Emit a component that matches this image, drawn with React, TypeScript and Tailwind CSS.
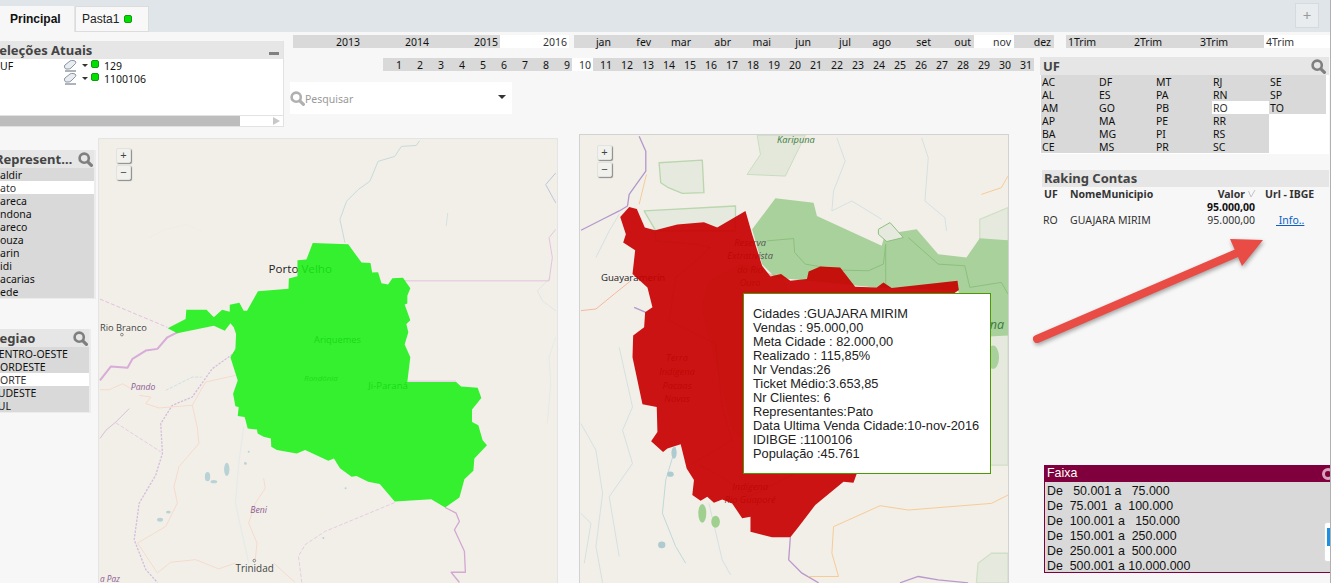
const years = ['2013', '2014', '2015', '2016'];
const months = ['jan', 'fev', 'mar', 'abr', 'mai', 'jun', 'jul', 'ago', 'set', 'out', 'nov', 'dez'];
const trims = ['1Trim', '2Trim', '3Trim', '4Trim'];
const days = Array.from({ length: 31 }, (_, i) => i + 1);
const ufColumns = [
  ['AC', 'AL', 'AM', 'AP', 'BA', 'CE'],
  ['DF', 'ES', 'GO', 'MA', 'MG', 'MS'],
  ['MT', 'PA', 'PB', 'PE', 'PI', 'PR'],
  ['RJ', 'RN', 'RO', 'RR', 'RS', 'SC'],
  ['SE', 'SP', 'TO'],
];
const reps = ['aldir', 'ato', 'areca', 'ndona', 'areco', 'ouza', 'arin', 'idi', 'acarias', 'ede'];
const regions = ['CENTRO-OESTE', 'NORDESTE', 'NORTE', 'SUDESTE', 'SUL'];
const faixas = [
  'De \u00a0\u00a050.001 a \u00a0\u00a075.000',
  'De \u00a075.001 \u00a0a \u00a0100.000',
  'De \u00a0100.001 a \u00a0\u00a0150.000',
  'De \u00a0150.001 a \u00a0250.000',
  'De \u00a0250.001 a \u00a0500.000',
  'De \u00a0500.001 a 10.000.000',
];
const tooltipLines = [
  'Cidades :GUAJARA MIRIM',
  'Vendas : 95.000,00',
  'Meta Cidade : 82.000,00',
  'Realizado : 115,85%',
  'Nr Vendas:26',
  'Ticket Médio:3.653,85',
  'Nr Clientes: 6',
  'Representantes:Pato',
  'Data Ultima Venda Cidade:10-nov-2016',
  'IDIBGE :1100106',
  'População :45.761',
];

function SearchGlyph({ light }: { light?: boolean }) {
  return (
    <svg width="15" height="15" viewBox="0 0 15 15" className="shrink-0">
      <circle cx="6.2" cy="6.2" r="4.6" fill="none" stroke={light ? '#b0b0b0' : '#7f7f7f'} strokeWidth="2.6" />
      <path d="M9.8 9.8 L13.4 13.4" stroke={light ? '#b0b0b0' : '#7f7f7f'} strokeWidth="3.2" strokeLinecap="round" />
    </svg>
  );
}

function Eraser() {
  return (
    <svg width="14" height="13" viewBox="0 0 14 13" className="shrink-0">
      <path d="M1.5 8 Q1 7 2 6 L7 2 Q8 1.2 10 1.5 L12 2 Q13.5 3 12.5 4.5 L8 9 Q7 10 5 10 L3 10 Q2 10 1.5 8 Z" fill="#e9edf2" stroke="#8a94a2" strokeWidth="1" />
      <path d="M2 12 H13" stroke="#5d6876" strokeWidth="1" />
    </svg>
  );
}

function GreenDot() {
  return <span className="inline-block w-[8px] h-[8px] rounded-[2px] bg-[#00e000] border border-[#129a12]" />;
}

function SelectionRow({ field, value }: { field: string; value: string }) {
  return (
    <div className="flex items-center h-[13px]">
      <span className="w-[63px] mt-[2px]">{field}</span>
      <Eraser />
      <span className="ml-[5px] mr-[3px] w-0 h-0 border-x-[3px] border-x-transparent border-t-[3px] border-t-[#333]" />
      <span className="-mt-[3px] flex"><GreenDot /></span>
      <span className="ml-[5px] mt-[2px]">{value}</span>
    </div>
  );
}

function ZoomControls({ top }: { top: string }) {
  return (
    <div className={`absolute left-[17px] ${top} flex flex-col gap-[2px] text-[#444] font-['Liberation_Sans',sans-serif]`}>
      {['+', '−'].map((s) => (
        <div
          key={s}
          className="w-[15px] h-[15px] rounded-[2px] bg-[#f1f1ee] border border-[#e2e2de] shadow-[1px_1px_1px_#8a8a8a] flex items-center justify-center text-[11px] leading-none"
        >
          {s}
        </div>
      ))}
    </div>
  );
}

function ListHeader({ title, offset }: { title: string; offset: string }) {
  return (
    <div className="flex items-center justify-between h-[18px] bg-[#e6e6e6] pr-[1px] overflow-hidden">
      <span className={`${offset} text-[13px] font-bold text-[#444] whitespace-nowrap`}>{title}</span>
      <SearchGlyph />
    </div>
  );
}

function MapLeft() {
  return (
    <svg viewBox="9 24 1380 1335" className="w-full h-full block font-['Open_Sans',sans-serif]">
      <rect x="0" y="0" width="1400" height="1400" fill="#f2efe9" />
      <g fill="none" strokeLinejoin="round">
        <path d="M975 28 965 42 920 45 900 75 850 90 825 150 790 175 755 210 735 265 750 335" stroke="#c5dadb" strokeWidth="3" />
        <path d="M1385 125 1355 160 1385 215" stroke="#b9c6dd" strokeWidth="3" />
        <path d="M1060 245 1055 285" stroke="#c5dadb" strokeWidth="2" />
        <path d="M1385 540 1345 510 1330 480 1370 440" stroke="#d4e0e0" strokeWidth="2" />
        <path d="M1385 620 1365 680 1370 760 1360 880" stroke="#dfe6e4" strokeWidth="2" />
        <path d="M12 750 45 708 95 712 110 685 150 660 185 655 215 620 245 605" stroke="#d8acd8" strokeWidth="6" />
        <path d="M12 505 215 590" stroke="#e3bfdf" strokeWidth="3" strokeDasharray="12 6" />
        <path d="M925 450 1365 450 1375 380 1365 320 1385 295" stroke="#e3c3df" strokeWidth="3" />
        <path d="M938 752 1085 752" stroke="#e3c3df" strokeWidth="3" />
        <path d="M1052 1133 1085 1150 1095 1175 1080 1200 1110 1265 1113 1328 1070 1328 1095 1359" stroke="#d3a8d3" strokeWidth="4" />
        <path d="M900 1118 690 1205 630 1245 610 1280 620 1359" stroke="#e6cde0" strokeWidth="3" strokeDasharray="12 5" />
        <path d="M420 665 350 715 290 800 230 825 195 880 200 970 180 1035 130 1120 115 1230 150 1320 185 1359" stroke="#d5bedb" strokeWidth="4" strokeDasharray="7 4" />
        <path d="M60 878 195 965" stroke="#e6cde0" strokeWidth="3" strokeDasharray="12 5" />
        <path d="M12 925 30 900 60 875 100 835" stroke="#d5bedb" strokeWidth="3" />
        <path d="M12 778 40 778 80 760 105 775" stroke="#f6d6c6" strokeWidth="2.5" />
        <path d="M130 795 165 800 150 820 190 833 290 825 305 890 310 940 250 1010 235 1070 245 1120 210 1190 125 1240 185 1330 225 1298 300 1290 370 1318 420 1300" stroke="#f6d6c6" strokeWidth="2.5" />
        <path d="M290 825 330 755 420 735" stroke="#f6d6c6" strokeWidth="2.5" />
        <path d="M505 1045 510 1075 480 1120 460 1180 485 1240 480 1290" stroke="#f6d6c6" strokeWidth="2.5" />
        <path d="M535 1300 600 1359" stroke="#f6d6c6" strokeWidth="2.5" />
        <path d="M210 780 290 740 320 740" stroke="#cfe0e0" strokeWidth="3" strokeDasharray="10 4" />
        <path d="M445 890 430 1000 420 1120 460 1300" stroke="#e6ebe8" strokeWidth="4" />
        <path d="M160 320 210 295 270 280 320 300" stroke="#ecebe6" strokeWidth="2" />
      </g>
      <g fill="#b8d2d5">
        <ellipse cx="336" cy="1040" rx="8" ry="14" />
        <ellipse cx="355" cy="1055" rx="10" ry="5" />
        <ellipse cx="394" cy="1018" rx="8" ry="20" />
        <ellipse cx="193" cy="1170" rx="9" ry="6" />
        <ellipse cx="218" cy="1147" rx="7" ry="4" />
        <circle cx="450" cy="1000" r="4" />
        <circle cx="460" cy="965" r="3" />
        <circle cx="752" cy="1075" r="3" />
        <circle cx="685" cy="1225" r="3" />
      </g>
      <circle cx="78" cy="612" r="4" fill="none" stroke="#555" strokeWidth="2" />
      <circle cx="477" cy="1293" r="4" fill="none" stroke="#555" strokeWidth="2" />
      <text x="12" y="600" fontSize="28" fill="#444">Rio Branco</text>
      <text x="105" y="778" fontSize="26" fontStyle="italic" fill="#8d5c92">Pando</text>
      <text x="465" y="1150" fontSize="26" fontStyle="italic" fill="#8d5c92">Beni</text>
      <text x="420" y="1327" fontSize="30" fill="#444">Trinidad</text>
      <text x="12" y="1358" fontSize="25" fontStyle="italic" fill="#8d5c92">a Paz</text>
      <text x="520" y="427" fontSize="35" fill="#222">Porto Velho</text>
      <text x="657" y="637" fontSize="28" fill="#222">Ariquemes</text>
      <text x="627" y="753" fontSize="24" fontStyle="italic" fill="#444">Rondônia</text>
      <text x="820" y="776" fontSize="29" fill="#222">Ji-Paraná</text>
      <polygon
        fill="#19f015"
        fillOpacity="0.88"
        points="216,593 270,565 272,537 333,537 355,560 380,537 403,543 403,522 432,516 445,540 455,540 488,481 580,474 581,443 607,436 607,388 634,386 653,336 760,340 800,395 827,396 832,425 850,424 860,457 880,461 893,442 925,441 947,472 938,495 938,518 930,521 947,569 935,580 941,605 930,642 947,680 938,755 1085,755 1100,768 1150,772 1161,803 1133,838 1133,875 1152,885 1165,930 1178,945 1140,985 1137,1022 1110,1048 1095,1103 1052,1133 1010,1108 900,1115 855,1062 820,1055 785,1038 770,1040 735,1015 717,985 700,992 630,960 605,970 545,960 528,950 527,925 505,920 487,910 485,898 457,895 448,860 427,857 430,830 420,828 413,790 427,750 405,680 420,655 422,610 415,590 405,578 388,600 355,585 245,608"
      />
    </svg>
  );
}

function MapRight() {
  return (
    <svg viewBox="12 12 1288 1347" className="w-full h-full block font-['Open_Sans',sans-serif]">
      <rect x="0" y="0" width="1400" height="1400" fill="#f2efe9" />
      <g fill="#e6eade" stroke="#b9d6ad" strokeWidth="4" strokeLinejoin="round">
        <path d="M250 95 380 87 385 185 320 187 278 170 255 155Z" />
        <path d="M205 240 480 225 480 300 240 300Z" />
        <path d="M545 12 690 12 630 135 515 130 555 70Z" fill="#e3e8da" stroke="#c9dcbf" strokeWidth="3" />
        <path d="M1215 265 1300 230 1300 340 1215 340Z" stroke="#cfe0c6" />
        <path d="M1245 610 1300 610 1300 1005 1245 1005Z" stroke="#cfe0c6" />
        <path d="M1205 1359 1210 1300 1250 1270 1300 1270 1300 1359Z" stroke="#cfe0c6" />
      </g>
      <path
        fill="#a9d19b"
        d="M530 295 600 202 715 215 725 255 920 345 930 310 1025 295 1090 370 1175 380 1215 322 1300 328 1300 615 1200 620 1150 480 900 470 600 440 560 400Z"
      />
      <ellipse cx="1255" cy="680" rx="18" ry="35" fill="#a9d19b" />
      <path d="M910 295 945 275 985 320 935 332 910 310Z" fill="#e6eade" stroke="#8cc07c" strokeWidth="3" />
      <g fill="none" stroke="#8cc07c" strokeWidth="3" strokeLinejoin="round">
        <path d="M575 330 655 323 658 365 690 400 720 405 800 418 880 420 925 400 932 340 932 470" />
        <path d="M1000 320 1090 400 1170 405 1185 470 1280 455 1300 490" />
      </g>
      <g fill="none" strokeLinejoin="round">
        <path d="M190 15 210 60 210 120 160 190 155 225 130 240 80 265 15 298" stroke="#b398cc" strokeWidth="4" />
        <path d="M212 130 190 220" stroke="#f7cb95" strokeWidth="3" />
        <path d="M15 540 60 535 115 490 165 450" stroke="#f5b89b" strokeWidth="3" />
        <path d="M175 530 210 545" stroke="#b398cc" strokeWidth="4" />
        <path d="M645 1222 640 1290 680 1330 730 1359" stroke="#bb98cc" strokeWidth="4" />
        <path d="M975 1359 1030 1340 1090 1350 1180 1359" stroke="#bb98cc" strokeWidth="4" />
        <path d="M775 1190 915 1127 1000 1140 1250 1120 1300 1095" stroke="#f7cb95" strokeWidth="3" />
        <path d="M775 1190 770 1270 790 1340 700 1340" stroke="#f7cb95" strokeWidth="3" />
        <path d="M1220 190 1280 170 1300 135" stroke="#f7cb95" strokeWidth="3" />
        <path d="M785 20 810 90 775 180 770 240 830 210 920 265" stroke="#c5dadb" strokeWidth="2" />
        <path d="M1040 20 1060 80 1050 210 1110 260 1115 300" stroke="#c5dadb" strokeWidth="2" />
        <path d="M15 880 60 960 80 1090 60 1250 80 1359" stroke="#c5dadb" strokeWidth="2" />
        <path d="M130 650 170 830 140 900 170 1000 100 1100 130 1280" stroke="#c5dadb" strokeWidth="2" />
        <path d="M300 950 270 1050 260 1150 300 1250 330 1300" stroke="#bfd8da" strokeWidth="3" />
        <path d="M15 1150 45 1180 25 1300" stroke="#c5dadb" strokeWidth="2" />
        <path d="M60 380 100 300 130 250" stroke="#c5dadb" strokeWidth="2" />
        <path d="M400 1120 440 1290 465 1335" stroke="#c5dadb" strokeWidth="2" />
      </g>
      <g fill="#9fd08f">
        <ellipse cx="380" cy="1150" rx="12" ry="28" />
        <ellipse cx="420" cy="1175" rx="13" ry="18" />
      </g>
      <g fill="#aeccd0">
        <ellipse cx="295" cy="968" rx="8" ry="18" />
        <ellipse cx="284" cy="1032" rx="10" ry="8" />
        <ellipse cx="258" cy="1245" rx="11" ry="10" />
      </g>
      <text x="605" y="35" fontSize="28" fontStyle="italic" fill="#3c7a3c">Karipuna</text>
      <text x="75" y="450" fontSize="29" fill="#222">Guayaramerín</text>
      <text x="1245" y="596" fontSize="38" fontStyle="italic" fill="#3c7a3c">na</text>
      <g fontSize="28" fontStyle="italic" fill="#555" textAnchor="middle">
        <text x="524" y="344">Reserva</text>
        <text x="524" y="385">Extrativista</text>
        <text x="524" y="426">do Rio</text>
        <text x="524" y="467">Ouro</text>
        <text x="304" y="693">Terra</text>
        <text x="304" y="734">Indígena</text>
        <text x="304" y="775">Pacaas</text>
        <text x="304" y="816">Novas</text>
        <text x="524" y="1080">Indígena</text>
        <text x="524" y="1120">Rio Guaporé</text>
      </g>
      <polygon
        fill="#c80000"
        fillOpacity="0.92"
        points="133,258 160,228 183,234 207,290 238,298 305,281 385,274 425,290 510,240 530,310 560,405 585,437 617,430 645,450 695,445 700,422 735,407 795,410 840,468 905,470 925,455 950,472 1148,450 1152,478 1135,490 1100,700 845,1030 835,1058 805,1055 720,1125 670,1190 645,1222 590,1222 525,1205 525,1160 500,1165 470,1120 440,1108 415,1118 395,1100 375,1112 350,1095 355,1050 333,1015 315,942 275,955 262,965 226,933 245,905 243,830 200,822 170,680 172,615 205,590 208,545 230,530 215,470 170,430 178,358 142,335 150,310"
      />
      <path d="M378 530 400 450 500 400 620 440 700 600 600 1000 470 900 420 700Z" fill="#bf1208" fillOpacity="0.2" />
      <g fill="none" stroke="#b51010" strokeWidth="2" strokeOpacity="0.35">
        <path d="M238 298 240 330 360 340 405 350 350 400 300 440 280 570 420 640 440 830 470 930 350 1000" />
        <path d="M370 1005 440 1040 520 1100 660 1030" />
      </g>
    </svg>
  );
}

export default function App() {
  return (
    <div className="relative w-[1331px] h-[583px] overflow-hidden bg-[#f7f7f7] text-[10.5px] leading-[15px] text-[#111] font-['Noto_Sans',sans-serif]">
      {/* tab bar */}
      <div className="flex items-end justify-between h-[32px] bg-[#dfe5e8] pr-[12px]">
        <div className="flex items-end">
          <div className="w-[74px] h-[26px] bg-[#f7f7f7] pl-[10px] flex items-center text-[12px] font-bold font-['Liberation_Sans',sans-serif]">
            Principal
          </div>
          <div className="ml-px w-[74px] h-[26px] bg-[#f8f8f8] border border-[#dcdcdc] pl-[6px] flex items-center gap-[5px] text-[12px] text-[#222] font-['Liberation_Sans',sans-serif]">
            Pasta1 <GreenDot />
          </div>
        </div>
        <div className="mb-[4px] w-[24px] h-[25px] bg-[#e8ecee] border border-[#d5dadc] flex items-center justify-center text-[#999] text-[15px]">+</div>
      </div>

      {/* top filters */}
      <div className="flex items-start h-[102px]">
        <div className="mt-[9px] w-[284px] h-[86px] bg-white border-r border-b border-[#e2e2e2] shrink-0 flex flex-col">
          <div className="flex items-center justify-between h-[18px] bg-[#e6e6e6] pr-[4px] overflow-hidden">
            <span className="-ml-[8px] text-[13px] font-bold text-[#444] whitespace-nowrap">Seleções Atuais</span>
            <span className="mt-[6px] w-[10px] h-[3px] bg-[#808080]" />
          </div>
          <div className="h-[56px]">
            <SelectionRow field="UF" value="129" />
            <SelectionRow field="" value="1100106" />
          </div>
          <div className="flex items-center h-[11px] border-t border-[#e2e2e2]">
            <div className="w-[240px] h-full bg-[#bdbdbd]" />
            <div className="ml-auto mr-[3px] w-0 h-0 border-y-[4px] border-y-transparent border-l-[7px] border-l-[#c8c8c8]" />
          </div>
        </div>

        <div className="ml-[9px] pt-[3px] flex flex-col shrink-0">
          <div className="flex h-[13px]">
            <div className="flex w-[276px]">
              {years.map((y) => (
                <div key={y} className={`w-[69px] pr-[2px] text-right ${y === '2016' ? 'bg-white text-[#333]' : 'bg-[#d9d9d9]'}`}>{y}</div>
              ))}
            </div>
            <div className="flex w-[480px] ml-[5px]">
              {months.map((m) => (
                <div key={m} className={`flex-1 pr-[3px] text-right ${m === 'nov' ? 'bg-white text-[#333]' : 'bg-[#d9d9d9]'}`}>{m}</div>
              ))}
            </div>
            <div className="flex w-[264px] ml-[12px]">
              {trims.map((t) => (
                <div key={t} className={`w-[66px] pl-[2px] ${t === '4Trim' ? 'bg-white text-[#333]' : 'bg-[#d9d9d9]'}`}>{t}</div>
              ))}
            </div>
          </div>
          <div className="flex mt-[10px]">
            <div className="w-[741px] flex flex-col">
              <div className="ml-[90px] flex h-[13px]">
                {days.map((d) => (
                  <div key={d} className={`flex-1 pr-[2px] text-right ${d === 10 ? 'bg-white text-[#333]' : 'bg-[#d9d9d9]'}`}>{d}</div>
                ))}
              </div>
              <div className="-ml-[3px] mt-[11px] w-[222px] h-[32px] bg-white flex items-center text-[#999]">
                <SearchGlyph light />
                <span className="mt-[2px]">Pesquisar</span>
                <span className="ml-auto mr-[6px] mb-[3px] w-0 h-0 border-x-[4px] border-x-transparent border-t-[4px] border-t-[#333]" />
              </div>
            </div>
            <div className="-mt-px ml-[6px] w-[289px] h-[97px] bg-white">
              <div className="flex items-center justify-between h-[18px] bg-[#e6e6e6] pl-[3px] pr-[3px]">
                <span className="text-[13px] font-bold text-[#444]">UF</span>
                <SearchGlyph />
              </div>
              <div className="flex ml-px w-[285px]">
                {ufColumns.map((col, i) => (
                  <div key={i} className="w-[57px]">
                    {col.map((uf) => (
                      <div key={uf} className={`h-[13px] pl-px ${uf === 'RO' ? 'bg-white text-[#333]' : 'bg-[#d9d9d9]'}`}>{uf}</div>
                    ))}
                  </div>
                ))}
              </div>
            </div>
          </div>
        </div>
      </div>

      {/* lists, maps, ranking */}
      <div className="flex items-start">
        <div className="w-[98px] shrink-0 flex flex-col items-start">
          <div className="mt-[16px] w-[96px] bg-[#ececec] pr-[2px]">
            <ListHeader title="Representantes" offset="-ml-[5px] w-[82px] overflow-hidden text-ellipsis" />
            <div className="pb-[1px]">
              {reps.map((r) => (
                <div key={r} className={`h-[13px] ${r === 'ato' ? 'bg-white text-[#333]' : 'bg-[#d9d9d9]'}`}>{r}</div>
              ))}
            </div>
          </div>
          <div className="mt-[30px] w-[91px] bg-[#ececec] pr-[2px] pb-[1px]">
            <ListHeader title="Regiao" offset="-ml-[9px]" />
            {regions.map((r) => (
              <div key={r} className={`h-[13px] overflow-hidden whitespace-nowrap ${r === 'NORTE' ? 'bg-white text-[#333]' : 'bg-[#d9d9d9]'}`}>
                <span className="block -ml-[8px] -mt-px pt-px">{r}</span>
              </div>
            ))}
          </div>
        </div>

        <div className="relative mt-[4px] w-[460px] h-[445px] shrink-0 border border-[#e4e4e4] border-b-0">
          <MapLeft />
          <ZoomControls top="top-[9px]" />
        </div>

        <div className="relative ml-[21px] w-[430px] h-[449px] shrink-0 border border-[#d2d2d2] border-b-0">
          <MapRight />
          <ZoomControls top="top-[10px]" />
          <div className="absolute left-[163px] top-[158px] w-[248px] h-[181px] bg-white border border-[#4d9900] pl-[9px] pt-[13px] text-[12.8px] leading-[14px] text-[#222] whitespace-nowrap font-['Liberation_Sans',sans-serif]">
            {tooltipLines.map((line) => (
              <div key={line}>{line}</div>
            ))}
          </div>
        </div>

        <div className="ml-[33px] w-[287px] shrink-0">
          <div className="mt-[36px] h-[56px]">
            <div className="h-[17px] bg-[#e6e6e6] pl-[2px] text-[13px] font-bold text-[#444] leading-[17px]">Raking Contas</div>
            <div className="flex h-[13px] font-bold text-[#333]">
              <span className="w-[28px] pl-[2px]">UF</span>
              <span className="w-[118px]">NomeMunicipio</span>
              <span className="w-[57px] text-right">Valor</span>
              <svg width="9" height="9" viewBox="0 0 9 9" className="ml-[2px] mt-[2px] shrink-0">
                <path d="M1.5 2 L4 8 L8 1" fill="none" stroke="#c4c4c4" strokeWidth="1" />
              </svg>
              <span className="ml-[9px]">Url - IBGE</span>
            </div>
            <div className="flex h-[13px] font-bold text-[#111]">
              <span className="w-[213px] text-right">95.000,00</span>
            </div>
            <div className="flex h-[13px] text-[#333]">
              <span className="w-[28px] pl-px">RO</span>
              <span className="w-[105px] whitespace-nowrap">GUAJARA MIRIM</span>
              <span className="w-[80px] text-right">95.000,00</span>
              <a className="ml-[21px] h-[14px] text-[#0a5fc8] underline whitespace-pre"> Info..</a>
            </div>
          </div>
          <div className="mt-[239px] ml-[2px] w-[290px] h-[108px] border border-[#7f003c] bg-[#d9d9d9] text-[12.4px] leading-[15px] text-[#111] font-['Liberation_Sans',sans-serif]">
            <div className="flex items-center justify-between h-[17px] -mt-px bg-[#7f003c] text-white pl-[2px]">
              <span>Faixa</span>
              <span className="w-[12px] h-[12px] rounded-full border-[3px] border-[#d9a3bf] mr-[-1px]" />
            </div>
            <div className="pl-[2px] pt-[2px]">
              {faixas.map((f) => (
                <div key={f} className="whitespace-pre">{f}</div>
              ))}
            </div>
          </div>
        </div>
      </div>

      {/* annotation arrow */}
      <svg className="absolute left-[1025px] top-[230px] drop-shadow-[1px_2px_2px_rgba(0,0,0,0.35)]" width="250" height="120" viewBox="1025 230 250 120">
        <line x1="1037" y1="339" x2="1237" y2="253" stroke="#e94b45" strokeWidth="8" strokeLinecap="round" />
        <polygon points="1230,239 1263,240 1242,266" fill="#e94b45" />
      </svg>

      {/* floating widget at the edge */}
      <div className="absolute left-[1324px] top-[522px] w-[10px] h-[40px] rounded-l-[3px] bg-white border border-[#ddd] pl-[2px] pt-[5px]">
        <div className="w-[8px] h-[18px] bg-[#1f8fe0]" />
      </div>
      <div className="absolute right-0 top-0 h-full w-px bg-[#b0b0b0]" />
    </div>
  );
}
